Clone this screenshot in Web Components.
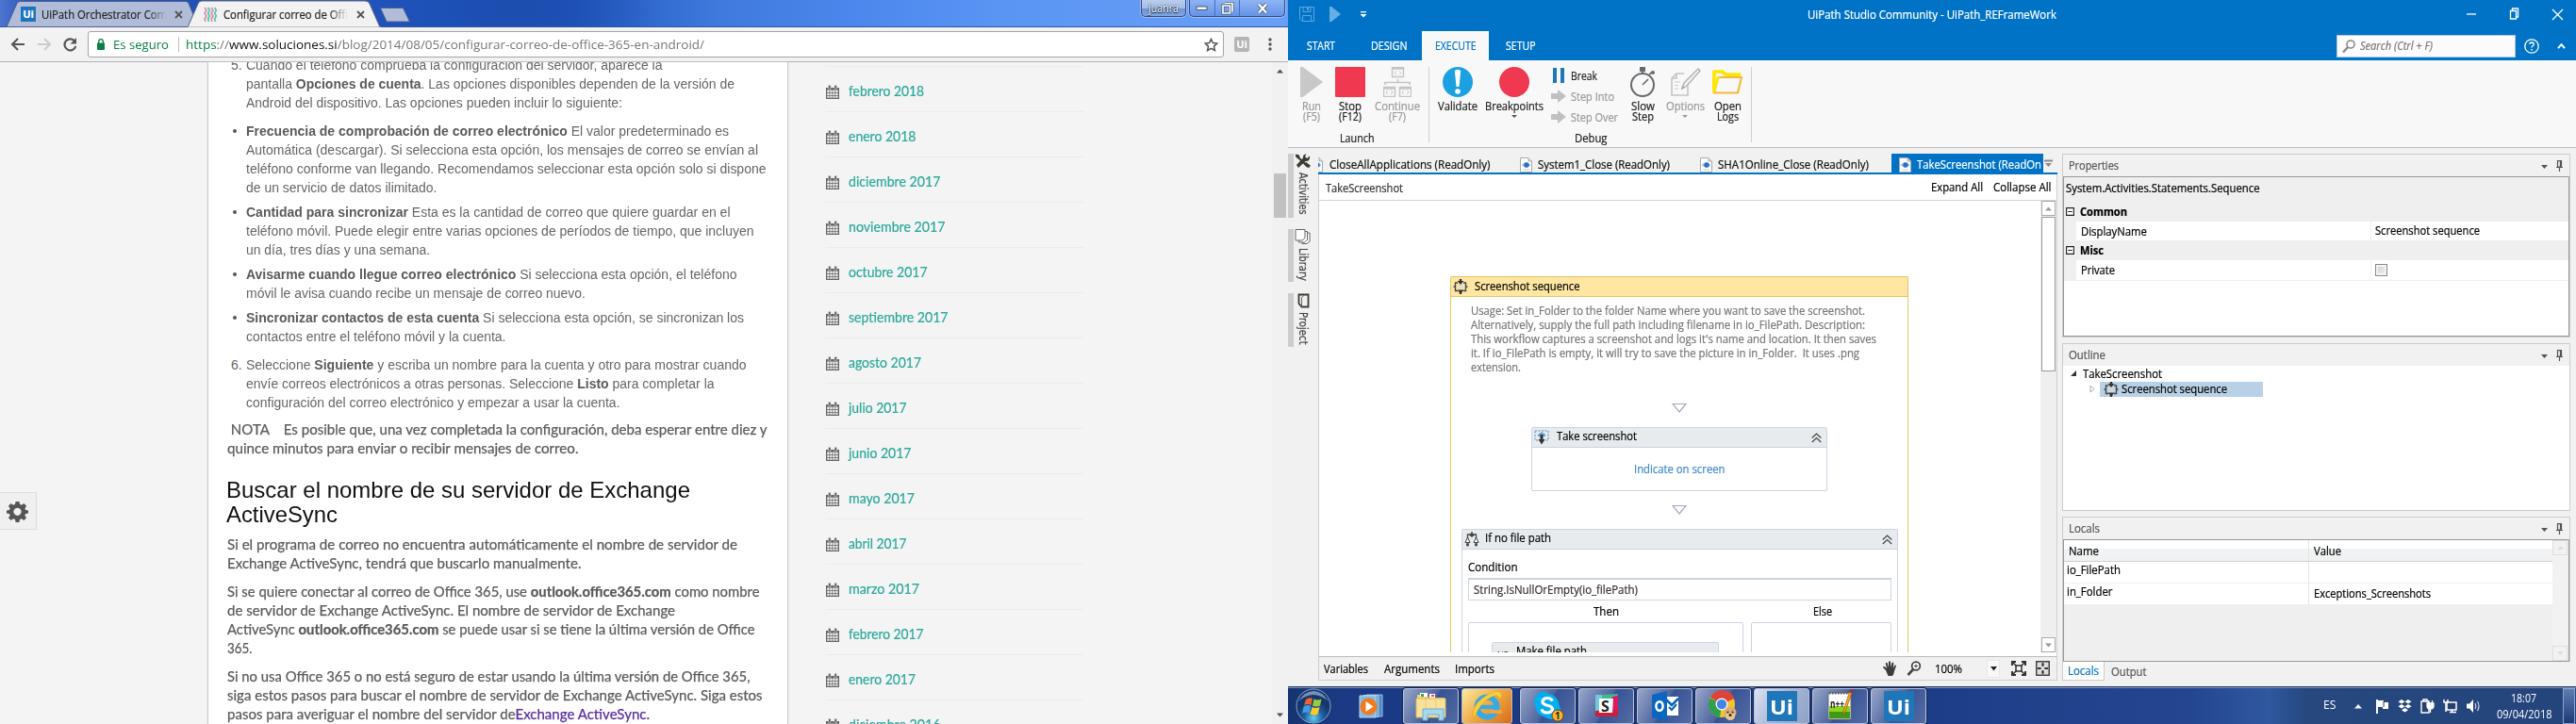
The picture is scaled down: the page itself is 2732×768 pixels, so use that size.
<!DOCTYPE html>
<html lang="es">
<head>
<meta charset="utf-8">
<title>Escritorio</title>
<style>
html,body{margin:0;padding:0;width:2732px;height:768px;overflow:hidden;background:#f0f0f0}
body{font-family:"Open Sans","Noto Sans",sans-serif;font-size:12px}
</style>
</head>
<body>
<desk-top></desk-top>
<script>
const define = (name, html) => customElements.define(name, class extends HTMLElement {
  connectedCallback() {
    if (this.shadowRoot) return;
    this.attachShadow({mode: 'open'}).innerHTML = typeof html === 'function' ? html(this) : html;
  }
});

/* One line of text condensed or widened to a given width. */
customElements.define('fit-text', class extends HTMLElement {
  connectedCallback() {
    if (!this.shadowRoot) {
      this.attachShadow({mode: 'open'}).innerHTML =
        `<style>:host{display:block;flex:none;white-space:pre;width:${this.getAttribute('w')}px}
        span{display:inline-block;transform-origin:0 50%;white-space:pre}</style><span><slot></slot></span>`;
    }
    this.fit();
    window.addEventListener('load', () => this.fit());
  }
  fit() {
    const s = this.shadowRoot.querySelector('span');
    s.style.transform = 'none';
    const n = s.getBoundingClientRect().width;
    if (n) s.style.transform = `scaleX(${(this.getAttribute('w') / n).toFixed(4)})`;
  }
});
const T = (w, t, c = '', s = '') => `<fit-text w="${w}" class="${c}" style="${s}">${t}</fit-text>`;

const ICONS = {
  seq: [16,16,'<path d="M5 4H2.500v8.500H5M11 4h2.500v8.500H11M2.500 8H.5M13.500 8h2" fill="none" stroke="#444" stroke-width="1.400"/><path d="M5 5h6v6.500H5z" fill="#d8d8d8" opacity=".7"/><path d="M8 0v4M8 12v4" stroke="#333" stroke-width="2.400"/><path d="M4.500 2h7L8 6zM4.500 11.500h7L8 15.500z" fill="#333"/>'],
  page: [13,16,'<path d="M.5.500h8.500l3.500 3.500v11.500H.5z" fill="#fff" stroke="#a9a9a9"/><path d="M9 .500V4h3.500" fill="#ddd" stroke="#a9a9a9"/><path d="M1.500 8q5-5.500 10 0-5 5.500-10 0z" fill="#a8c6e8"/><circle cx="7" cy="8" r="2.700" fill="#2b6fc7"/><path d="M3 13h7" stroke="#ccc"/>'],
  cal: [14,15,'<path d="M0 3h14v12H0z" fill="#666"/><path d="M1.300 5.500h2.200V8H1.300zM4.300 5.500h2.200V8H4.300zM7.300 5.500h2.200V8H7.300zM10.300 5.500h2.300V8h-2.300zM1.300 8.800h2.200v2.200H1.300zM4.300 8.800h2.200v2.200H4.300zM7.300 8.800h2.200v2.200H7.300zM10.300 8.800h2.300v2.200h-2.300zM1.300 11.800h2.200v2H1.300zM4.300 11.800h2.200v2H4.300zM7.300 11.800h2.200v2H7.300zM10.300 11.800h2.300v2h-2.300z" fill="#f4f4f4"/><rect x="2.500" y=".3" width="2.600" height="4.200" rx="1" fill="#666" stroke="#f4f4f4" stroke-width=".5"/><rect x="8.900" y=".3" width="2.600" height="4.200" rx="1" fill="#666" stroke="#f4f4f4" stroke-width=".5"/>'],
  gear: [24,24,'<path d="M10 1h4l.6 3 2 .9L19.200 3 22 6l-1.800 2.500.8 2 3 .500v3l-3 .6-.8 2L22 19l-2.800 2.800-2.600-1.800-2 .8L14 24h-4l-.6-3.200-2-.8L4.800 21.800 2 19l1.800-2.400-.8-2L0 14v-3l3-.500.8-2L2 6l2.800-3 2.600 1.900 2-.9zM12 8a4.300 4.300 0 1 0 .01 0z" fill="#555" fill-rule="evenodd"/>'],
  save: [16,16,'<path d="M.5.500H15.500V15.500H3L.5 13z" fill="none" stroke="#5ca6df"/><path d="M4 .500v5h8v-5M3.500 15.500v-6h9v6" fill="none" stroke="#5ca6df"/><path d="M9 1v3" stroke="#5ca6df" stroke-width="2"/>'],
  qplay: [12,16,'<path d="M0 0h2l10 8-10 8H0z" fill="#67aee5"/>'],
  qdown: [8,7,'<path d="M1 .700h6" stroke="#fff" stroke-width="1.300"/><path d="M.5 3h7L4 6.500z" fill="#fff"/>'],
  run: [24,32,'<path d="M0 0h2q1 0 2 1l20 15L4 31q-1 1-2 1H0z" fill="#c8c8c8"/>'],
  stop: [32,32,'<rect width="32" height="32" rx="1" fill="#f03850"/>'],
  cont: [30,32,'<g fill="none" stroke="#c4c4c4"><path d="M9.500.500h12v10h-12zM.500 21.500h12v10H.500zM17.500 21.500h12v10h-12zM9.500 2h12M.5 23h12M17.500 23h12" stroke-width="1.400"/><path d="M15.500 13v4M2 19v-2.500h26V19" stroke-width="1.600"/><path d="M14 4.500l-2 2 2 2M17 4.500l2 2-2 2M5 25l-2 2 2 2M8 25l2 2-2 2M22 25l-2 2 2 2M25 25l2 2-2 2"/></g>'],
  valid: [32,32,'<circle cx="16" cy="16" r="16" fill="#1ba1e2"/><path d="M12.800 4q3.200-2.500 6.400 0L17.500 21h-3z" fill="#fff"/><circle cx="16" cy="26" r="2.800" fill="#fff"/>'],
  bp: [32,32,'<circle cx="16" cy="16" r="16" fill="#f03850"/>'],
  dd: [6,3,'<path d="M0 0h6L3 3z" fill="#555"/>'],
  ddg: [6,3,'<path d="M0 0h6L3 3z" fill="#999"/>'],
  pause: [16,16,'<path d="M2 0h4v16H2zM10 0h4v16h-4z" fill="#1f77b8"/>'],
  step: [16,16,'<path d="M0 5h7V1l9 7-9 7v-4H0z" fill="#c0c0c0"/>'],
  watch: [28,32,'<circle cx="13" cy="19" r="12" fill="none" stroke="#666b70" stroke-width="2"/><path d="M10 0h6v5h-6zM12 5h2v3h-2z" fill="#666b70"/><path d="M20 8l4-3M13 19l6-6" stroke="#666b70" stroke-width="1.600"/><circle cx="24" cy="6" r="2" fill="#666b70"/>'],
  opt: [33,32,'<path d="M15 7H7L2 12v18h17V20M2 12h5V7" fill="none" stroke="#c4c4c4" stroke-width="1.600"/><path d="M5 16h6M5 19.500h4M5 23h4" stroke="#c8c8c8"/><path d="M30 2l2 2-14 16-5 3 2-6z" fill="#f4f4f4" stroke="#b0b0b0" stroke-width="1.400"/><path d="M12 24l1-4 3 2z" fill="#aaa"/>'],
  folder: [32,32,'<path d="M2 27V6.500q0-1.500 1.500-1.500h7l3 3h15v4" fill="none" stroke="#ffe600" stroke-width="3.600"/><path d="M5 27L7.500 11H30.500L28 27z" fill="#f8f8f8"/><path d="M2 27.500L6 11h25l-4 16.500z" fill="none" stroke="#f6b73c" stroke-width="2.200"/><path d="M1.500 27V5h10l3 3h15" fill="none" stroke="#ffe600" stroke-width="2.500"/><path d="M2.500 25L6.500 10" stroke="#ffe600" stroke-width="2.500"/>'],
  search: [14,14,'<circle cx="9" cy="5" r="4" fill="none" stroke="#888" stroke-width="1.600"/><path d="M6 8l-5 5.500" stroke="#888" stroke-width="2.400"/>'],
  help: [16,16,'<circle cx="8" cy="8" r="7.200" fill="none" stroke="#fff" stroke-width="1.300"/><path d="M5.800 6q.2-2 2.200-2 2.300.2 2.200 2 0 1-1.200 1.800-1 .6-1 1.700" fill="none" stroke="#fff" stroke-width="1.300"/><path d="M7.200 11h1.600v1.500H7.200z" fill="#fff"/>'],
  up: [9,6,'<path d="M1 5.200l3.500-4 3.500 4" fill="none" stroke="#fff" stroke-width="2"/>'],
  tools: [18,16,'<path d="M2 2l12 12" stroke="#3c3a35" stroke-width="2.200"/><path d="M1 .500l4 1 .5 3.500-2 .500L1 3z" fill="#3c3a35"/><path d="M16 2.500l-3 2.500-2-2 1.500-2.500q-4 0-3.500 4L2 12l2 3 7.500-7q5 .5 4.500-5.500z" fill="#3c3a35"/><path d="M11 10l5 4" stroke="#3c3a35" stroke-width="3"/>'],
  lib: [18,16,'<g fill="#fff" stroke="#666"><path d="M8 4h8v9l-3 2.500H8z"/><path d="M4.500 2.500h9v9l-3 2.500h-6z"/><path d="M1 .500h10v9L8 12H1z"/></g>'],
  proj: [14,16,'<path d="M2.500 1.500H12.500v13H5.500L2.500 11z" fill="none" stroke="#3c3a35" stroke-width="1.800"/><path d="M5.500 14V4.500L9 1.500" fill="none" stroke="#666"/>'],
  tri: [16,10,'<path d="M1 .500h14L8 9z" fill="#fff" stroke="#a0abc0" stroke-width="1.200"/>'],
  chev: [11,11,'<path d="M.8 5.500L5.500 1l4.700 4.500M.8 10L5.500 5.500l4.700 4.500" fill="none" stroke="#444" stroke-width="1.200"/>'],
  shot: [16,16,'<path d="M1 1h14v10H1z" fill="none" stroke="#4d8cc9" stroke-dasharray="2 1.500"/><path d="M4 5l4-3 4 3v2H4z" fill="#6aa5dd"/><path d="M8 5v7" stroke="#333" stroke-width="3"/><path d="M4.500 10h7L8 15.500z" fill="#333"/>'],
  iff: [16,16,'<path d="M8 0v4M3.500 8V3h9v5" fill="none" stroke="#444" stroke-width="1.300"/><path d="M8 1l3 2.500L8 6 5 3.500z" fill="#444"/><path d="M3.500 6L6 11.500H1zM12.500 6l2.500 5.500h-5z" fill="#fff" stroke="#444"/><path d="M3.500 11v3M12.500 11v3" stroke="#444" stroke-width="2"/><circle cx="3.500" cy="14" r="1.500" fill="#444"/><circle cx="12.500" cy="14" r="1.500" fill="#444"/>'],
  hand: [16,16,'<path d="M4 10L1 7q0-1.500 1.700-1L5 8 3.800 2.500q1-1.500 1.900 0L7 7 7 1q1-1.500 2 0l.2 6L10.500 2q1.300-1 1.800.4L11.700 8l1.800-3.500q1.500-.5 1.400 1L13 11q-.3 3-2 5H6.500z" fill="#3c3c3c"/>'],
  zoom: [16,16,'<circle cx="10" cy="5.500" r="4.300" fill="#fff" stroke="#444" stroke-width="1.800"/><path d="M10 3.500v4M8 5.500h4" stroke="#444"/><path d="M7 9l-5.500 6" stroke="#444" stroke-width="2.600"/>'],
  fit: [16,16,'<path d="M1 5V1h4M11 1h4v4M15 11v4h-4M5 15H1v-4" fill="none" stroke="#333" stroke-width="2"/><path d="M2 2l4 4M14 2l-4 4M2 14l4-4M14 14l-4-4" stroke="#333" stroke-width="1.500"/><path d="M5 5h6v6H5z" fill="none" stroke="#333" stroke-width="1.500"/>'],
  over: [16,16,'<path d="M.8.800h14.400v14.400H.8z" fill="#ddd" stroke="#444" stroke-width="1.600"/><path d="M8 2v4M8 10v4M2 8h4M10 8h4" stroke="#333" stroke-width="1.800"/><path d="M6.500 4h3M6.500 12h3" stroke="#333"/>'],
  pin: [7,12,'<path d="M1.500.600h4v6.400h-4zM0 7.500h7M3.500 7.500V12M4.500 1v6" fill="none" stroke="#555" stroke-width="1.200"/>'],
  pd: [7,4,'<path d="M0 0h7L3.500 4z" fill="#555"/>'],
  minus: [9,9,'<path d="M.6.600h7.800v7.800H.6z" fill="#fff" stroke="#222" stroke-width="1.100"/><path d="M2.200 4.500h4.600" stroke="#222"/>'],
  back: [16,14,'<path d="M15 7H2M8 1L2 7l6 6" fill="none" stroke="#555" stroke-width="2"/>'],
  fwd: [16,14,'<path d="M1 7h13M8 1l6 6-6 6" fill="none" stroke="#ccc" stroke-width="2"/>'],
  reload: [15,15,'<path d="M12.500 4A6 6 0 1 0 13.300 9" fill="none" stroke="#555" stroke-width="2.200"/><path d="M14 0v6.500H7.500z" fill="#555"/>'],
  lock: [8,12,'<path d="M0 4.500h8V11q0 1-1 1H1q-1 0-1-1z" fill="#0b8043"/><path d="M1.700 5V3q0-2.300 2.300-2.300T6.300 3v2" fill="none" stroke="#0b8043" stroke-width="1.300"/>'],
  star: [15,15,'<path d="M7.500 1.500l1.900 4.100 4.400.500-3.300 3 .900 4.400-3.900-2.200-3.900 2.200.900-4.400-3.300-3 4.400-.500z" fill="none" stroke="#555" stroke-width="1.500"/>'],
  dots: [4,16,'<circle cx="2" cy="3" r="1.700" fill="#555"/><circle cx="2" cy="8" r="1.700" fill="#555"/><circle cx="2" cy="13" r="1.700" fill="#555"/>'],
  x: [9,9,'<path d="M1 1l7 7M8 1L1 8" stroke="#555" stroke-width="1.800"/>'],
  fav: [14,16,'<path d="M1 1l2 3-2 3 2 3-2 3 1 3M8 1l2 3-2 3 2 3-2 3 1 3" fill="none" stroke="#e08ca4" stroke-width="1.700"/><path d="M4.500 1l2 3-2 3 2 3-2 3 1 3M11.500 1l2 3-2 3 2 3-2 3 1 3" fill="none" stroke="#55c4b4" stroke-width="1.700"/>'],
  orb: [38,38,'<defs><radialGradient id="o" cx=".5" cy=".85"><stop offset="0" stop-color="#5fd0f5"/><stop offset=".55" stop-color="#1f5f9e"/><stop offset="1" stop-color="#16376d"/></radialGradient></defs><circle cx="19" cy="19" r="18" fill="url(#o)" stroke="#7fa6cf"/><path d="M3 14q16-14 32 0Q28 3 19 3T3 14z" fill="#b5cbe6" opacity=".6"/><path d="M11 12q4-3 7-1l-1.500 7q-4-2-7.500 0z" fill="#f0642c"/><path d="M19.500 11.500q4 2 8 0L26 18.500q-4 2-8 0z" fill="#9ccc3c"/><path d="M8.600 19.500q4-2.500 7.600-.5l-1.700 7.500q-3.500-2-7.500.5z" fill="#3f9fe4"/><path d="M17.500 20q4 2 8 0l-1.800 7.500q-4 2-8 0z" fill="#ffc829"/>'],
  wmp: [26,26,'<path d="M8 1h17v23H8z" fill="#4e88bf" stroke="#8fc0e8"/><path d="M5 1.500h16v23H5z" fill="#6aa2d4" stroke="#a5cdee"/><path d="M1 2h17v23H1z" fill="#86b7de" stroke="#b8daf3"/><circle cx="10.500" cy="13.500" r="9" fill="#f07a1c"/><path d="M7.500 8l8 5.500-8 5.500z" fill="#fff"/>'],
  expl: [34,32,'<path d="M2 4h10l2 3h17v20H2z" fill="#f0d278"/><path d="M5 2h8v4H5zM15 3h6v4h-6z" fill="#fff"/><path d="M6 3h3v3H6z" fill="#41a33c"/><path d="M17 4h3v2h-3z" fill="#e44"/><path d="M1 8h31v20H1z" fill="#f8e29a" stroke="#d9b85e"/><path d="M11 8v20M22 8v20" stroke="#e8cb7c"/><path d="M8 31V19h22v12h-5v-6H13v6z" fill="#a7d7f0" stroke="#6aaed6"/>'],
  ie: [34,34,'<circle cx="17" cy="18" r="10.500" fill="none" stroke="#36a9e8" stroke-width="6"/><path d="M8 18h19" stroke="#36a9e8" stroke-width="4.500"/><path d="M20 21h13v4H20z" fill="#eba544"/><path d="M3 31Q-1 18 13 8 27-2 32 3q2 3-2 8 0-6-5-5Q10 11 3 31z" fill="#f7cf3b" stroke="#d19a1d" stroke-width=".5"/>'],
  skype: [34,34,'<circle cx="12" cy="12" r="10" fill="#00aff0"/><circle cx="20" cy="21" r="10" fill="#00aff0"/><circle cx="16" cy="16.500" r="12.500" fill="#00aff0"/><path d="M21.500 11.500q-1.500-3-5.500-3t-5 3q-.5 3.500 5 4.700 6 1.200 5.500 4.600-1.500 3.200-5.500 3.200-5 0-6-3.700" fill="none" stroke="#fff" stroke-width="3.200"/><circle cx="27" cy="27" r="6" fill="#f9b52e" stroke="#704b00"/>'],
  slack: [28,28,'<path d="M7 2l19-1-2 7-18 2z" fill="#3eb991"/><path d="M2 2h7l-1 20H2z" fill="#70cadb"/><path d="M20 4l6-1v22h-7z" fill="#e01563"/><path d="M2 19l24-1v7H2z" fill="#c8203c"/><path d="M6 6h15l-1 15H6z" fill="#fff"/>'],
  outl: [30,32,'<path d="M14 6h15v20H14z" fill="#fff"/><path d="M15 8l7 7 7-7" fill="none" stroke="#0a62b8" stroke-width="2.500"/><path d="M1 4l16-4v32L1 28z" fill="#0a66c0"/><ellipse cx="9" cy="16" rx="3.600" ry="4.800" fill="none" stroke="#fff" stroke-width="2.500"/><path d="M19 17l3 3 5-6" fill="none" stroke="#0a62b8" stroke-width="2"/>'],
  chrome: [34,34,'<circle cx="15" cy="15" r="14" fill="#f2c52d"/><path d="M15 15L3 8A14 14 0 0 1 28.500 9z" fill="#dd4437"/><path d="M15 15L2.500 8.500A14 14 0 0 0 13 29z" fill="#2f9e52"/><circle cx="15" cy="15" r="6.500" fill="#fff"/><circle cx="15" cy="15" r="5.200" fill="#4285e8"/><circle cx="24" cy="24" r="6.500" fill="#dcae74"/><ellipse cx="24" cy="28" rx="5" ry="4" fill="#e9c796"/><circle cx="21.500" cy="23.500" r="1" fill="#3a2211"/><circle cx="26.500" cy="23.500" r="1" fill="#3a2211"/><circle cx="24" cy="26.500" r="1.500" fill="#3a2211"/>'],
  npp: [32,34,'<path d="M3 3h24v28H3z" fill="#fff" stroke="#666"/><path d="M4 17h22v13H4z" fill="#8ed31e"/><path d="M4 23h22v7H4z" fill="#3c9b12"/><path d="M4 3.500h22" stroke="#555" stroke-width="2" stroke-dasharray="1.500 1.500"/><path d="M28 3l-7 20-2 4 0-5L25.500 2z" fill="#f5a51c" stroke="#86510d" stroke-width=".6"/><path d="M28 3l-2.500-1L27 0h3z" fill="#c22"/>'],
  flag: [15,16,'<path d="M2 1v15" stroke="#fff" stroke-width="2"/><path d="M3 2h6v2h5v7H8V9H3z" fill="#fff"/><path d="M9 3v6" stroke="#345" stroke-width="1"/>'],
  drop: [15,14,'<path d="M4 0l3.500 2.300L4 4.600.500 2.300zM11 0l3.500 2.300L11 4.600 7.500 2.300zM4 4.900l3.500 2.300L4 9.500.500 7.200zM11 4.900l3.500 2.300L11 9.500 7.500 7.200zM7.500 9l3.500 2.300-3.500 2.300L4 11.300z" fill="#fff"/>'],
  bat: [15,16,'<path d="M1 3h8v12H1zM3 1h4v2H3z" fill="#28406b" stroke="#fff" stroke-width="1.400"/><path d="M7 5h7v3q0 3-3.500 3T7 8zM8.500 2v3M12.500 2v3M10.500 11v4" fill="#fff" stroke="#fff" stroke-width="1.300"/>'],
  net: [15,16,'<path d="M4 4h10v8H4zM7 14.500h7M9.500 12v2" fill="#28406b" stroke="#fff" stroke-width="1.500"/><path d="M1 1v3h4V1M3 4v10" fill="none" stroke="#fff" stroke-width="1.500"/>'],
  vol: [15,16,'<path d="M1 5.500h3L8 1v14l-4-4.500H1z" fill="#fff"/><path d="M10 5q1.500 3 0 6M12.500 3q3 5 0 10" fill="none" stroke="#c8d4e8" stroke-width="1.200"/>'],
};
define('ui-icon', el => { const [w,h,b] = ICONS[el.getAttribute('n')];
  const W = el.getAttribute('w') || w, H = el.getAttribute('h') || h;
  return `<style>:host{display:block;flex:none;width:${W}px;height:${H}px}svg{display:block}</style><svg width="${W}" height="${H}" viewBox="0 0 ${w} ${h}" preserveAspectRatio="none">${b}</svg>`; });
const I = (n, s = '', x = '') => `<ui-icon n="${n}" style="${s}" ${x}></ui-icon>`;
const BASE = `*{box-sizing:border-box}.r{display:flex;align-items:center;flex:none}.c{display:flex;flex-direction:column;flex:none}.g{flex:1}`;

/* ---------- browser window ---------- */
define('chrome-tabs', `<style>${BASE}
:host{display:flex;height:29px;flex:none;background:radial-gradient(ellipse 150px 60px at 550px 10px,#1c4cae,transparent),linear-gradient(90deg,#4c74cf 0,#2f57b8 30px,#2350b5 200px,#1f54bc 480px,#2157bd 600px,#3f79dc 760px,#4b87ec 900px,#5a95f4 1060px,#6a9ff6 1366px);border-bottom:1px solid #2d55a4}
svg.bg{position:absolute;left:0;top:0}
.strip{position:relative;width:1366px;height:29px;display:flex;align-items:flex-start}
.t{position:relative;height:28px;display:flex;align-items:center;padding-top:2px;-webkit-text-stroke:.2px}
.ui{width:16px;height:16px;background:#1c74bb;color:#fff;font:bold 11px/15px "Open Sans";text-align:center}
.clip{-webkit-mask-image:linear-gradient(90deg,#000 85%,transparent)}
.win{position:relative;display:flex;height:18px;border:1px solid #2f4c84;border-top:0;border-radius:0 0 5px 5px;background:linear-gradient(#8fb4f4,#6493e6);box-shadow:0 0 0 1px #9dbdf6}
.win div{border-right:1px solid #4470bd;display:flex;align-items:center;justify-content:center}
.win div:last-child{border:0}
</style><div class="strip">
<svg class="bg" width="450" height="29"><path d="M7 28.500L18 3.500q1-2 3-2H197q2 0 3 2l5 12-5 13z" fill="#b1bdd8" stroke="#4c5f8c"/><path d="M199 29L210 4q1-3 4-3H387q4 0 5 3l11 25z" fill="#f2f2f2" stroke="#5c6a86"/><path d="M199 30h205v-1.300H199z" fill="#f2f2f2"/><path d="M403.500 8.500h24l7 14.500h-24.500z" fill="#b1bdd8" stroke="#4c5f8c"/></svg>
<div class="t" style="padding-left:22px;width:211px"><div class="ui">Ui</div>${T(133,'UiPath Orchestrator Com','clip','margin-left:6px;color:#222')}${I('x','margin-left:8px')}</div>
<div class="t" style="padding-left:5px;width:200px">${I('fav')}${T(132,'Configurar correo de Offi','clip','margin-left:7px;color:#222')}${I('x','margin-left:9px')}</div>
<div class="g"></div>
<div class="win" style="width:48px;background:linear-gradient(#b9cdee,#a3bde8 50%,#6e93cf 52%,#7ea5e2);margin-right:3px"><div style="width:100%;color:#fff;text-shadow:0 0 2px #123,0 1px 1px #123">${T(32,'juanra')}</div></div>
<div class="win" style="width:102px;margin-right:3px"><div style="width:27px"><svg width="14" height="6"><path d="M1 1h11v3.500H1z" fill="#fff" stroke="#456"/></svg></div><div style="width:27px"><svg width="14" height="14"><path d="M4 1.500h8v9M2 4h7.500v8H2z" fill="none" stroke="#456" stroke-width="3"/><path d="M4 1.500h8v9M2 4h7.500v8H2z" fill="none" stroke="#fff" stroke-width="1.700"/></svg></div><div style="width:47px"><svg width="14" height="12"><path d="M3 1.500l8 9M11 1.500l-8 9" stroke="#456" stroke-width="4"/><path d="M3 1.500l8 9M11 1.500l-8 9" stroke="#fff" stroke-width="2.400"/></svg></div></div>
</div>`);

define('chrome-bar', `<style>${BASE}
:host{display:flex;align-items:center;height:37px;flex:none;background:#f2f2f2;border-bottom:1px solid #b3b0b3;padding:0 17px 0 11px}
.box{height:28px;width:1205px;border:1px solid #a5a5a5;border-radius:3px;background:#fff;display:flex;align-items:center;padding:0 5px 0 9px;margin-left:11px;font-size:13.500px}
.ui{width:16px;height:16px;border-radius:2px;background:#b5b5b5;color:#fff;font:bold 11px/15px "Open Sans";text-align:center}
</style>${I('back')}${I('fwd','margin-left:12px')}${I('reload','margin-left:12px')}
<div class="box">${I('lock')}${T(59,'Es seguro','','color:#0b8043;margin-left:9px')}<div style="width:1px;height:16px;background:#bbb;margin:0 7px 0 10px"></div>${T(550,'<span style="color:#0b8043">https</span>://<span style="color:#111">www.soluciones.si</span>/blog/2014/08/05/configurar-correo-de-office-365-en-android/','','color:#777')}<div class="g"></div>${I('star')}</div>
<div class="ui" style="margin-left:11px">Ui</div><div class="g"></div>${I('dots')}`);

const para = (x, top, ls, extra='') => `<div style="margin:${top}px 0 0 ${x}px;${extra}">${ls.map(l=>T(l[0],l[1])).join('')}</div>`;
const item = (mark, top, ls) => `<div class="r" style="align-items:flex-start;margin:${top}px 0 0 24px"><div style="width:15.500px;flex:none">${mark}</div><div>${ls.map(l=>T(l[0],l[1])).join('')}</div></div>`;
const dot = '<div style="width:4px;height:4px;border-radius:50%;background:#555;margin:8px 0 0 2px"></div>';
define('blog-post', `<style>${BASE}
:host{display:block;flex:none;width:616px;height:702px;overflow:hidden;background:#fff;border:solid #cacaca;border-width:0 1px;box-shadow:0 0 2px #ddd;color:#666;font:14px/20px "Liberation Sans",Arial,sans-serif}
.m{font-family:Lato,"Open Sans",sans-serif;font-size:14.500px;color:#5c5c5c;-webkit-text-stroke:.25px}
h2{font:24px/26px "Liberation Sans",Arial,sans-serif;color:#111;margin:21px 0 0 19px}
b{color:#5a5a5a}.m b{font-weight:700}
</style>
${item('5.',-7,[[441.5,'Cuando el teléfono comprueba la configuración del servidor, aparece la'],[518,'pantalla <b>Opciones de cuenta</b>. Las opciones disponibles dependen de la versión de'],[399,'Android del dispositivo. Las opciones pueden incluir lo siguiente:']])}
${item(dot,10,[[512,'<b>Frecuencia de comprobación de correo electrónico</b> El valor predeterminado es'],[543,'Automática (descargar). Si selecciona esta opción, los mensajes de correo se envían al'],[551.5,'teléfono conforme van llegando. Recomendamos seleccionar esta opción solo si dispone'],[202.5,'de un servicio de datos ilimitado.']])}
${item(dot,6,[[513.5,'<b>Cantidad para sincronizar</b> Esta es la cantidad de correo que quiere guardar en el'],[538.5,'teléfono móvil. Puede elegir entre varias opciones de períodos de tiempo, que incluyen'],[195,'un día, tres días y una semana.']])}
${item(dot,6,[[520.5,'<b>Avisarme cuando llegue correo electrónico</b> Si selecciona esta opción, el teléfono'],[360,'móvil le avisa cuando recibe un mensaje de correo nuevo.']])}
${item(dot,6,[[528,'<b>Sincronizar contactos de esta cuenta</b> Si selecciona esta opción, se sincronizan los'],[275.5,'contactos entre el teléfono móvil y la cuenta.']])}
${item('6.',10,[[530.5,'Seleccione <b>Siguiente</b> y escriba un nombre para la cuenta y otro para mostrar cuando'],[496.5,'envíe correos electrónicos a otras personas. Seleccione <b>Listo</b> para completar la'],[396.5,'configuración del correo electrónico y empezar a usar la cuenta.']])}
<div class="m">${para(19.5,9,[[572.5,'&nbsp;NOTA &nbsp;&nbsp; Es posible que, una vez completada la configuración, deba esperar entre diez y'],[372.5,'quince minutos para enviar o recibir mensajes de correo.']])}</div>
<h2>${T(492,'Buscar el nombre de su servidor de Exchange')}${T(118,'ActiveSync')}</h2>
<div class="m">${para(19.5,9,[[541,'Si el programa de correo no encuentra automáticamente el nombre de servidor de'],[375.5,'Exchange ActiveSync, tendrá que buscarlo manualmente.']])}
${para(19.5,10,[[564.5,'Si se quiere conectar al correo de Office 365, use <b>outlook.office365.com</b> como nombre'],[475,'de servidor de Exchange ActiveSync. El nombre de servidor de Exchange'],[559.5,'ActiveSync <b>outlook.office365.com</b> se puede usar si se tiene la última versión de Office'],[26.5,'365.']])}
${para(19.5,10,[[554.5,'Si no usa Office 365 o no está seguro de estar usando la última versión de Office 365,'],[567.5,'siga estos pasos para buscar el nombre de servidor de Exchange ActiveSync. Siga estos'],[448,'pasos para averiguar el nombre del servidor de<span style="color:#5b2da0">Exchange ActiveSync.</span>']])}</div>`);

define('archive-list', `<style>${BASE}
:host{display:block;width:273px;margin-left:40px;flex:none;overflow:hidden;font:14.500px/20px Lato,"Open Sans",sans-serif;color:#2ba89c;-webkit-text-stroke:.2px}
.row{height:48px;border-top:1px solid #ebebeb;display:flex;align-items:center;padding-top:5px}
</style><div style="height:4px"></div>${[['febrero 2018',80],['enero 2018',71.5],['diciembre 2017',97.5],['noviembre 2017',102.5],['octubre 2017',83.5],['septiembre 2017',105.5],['agosto 2017',77],['julio 2017',61.5],['junio 2017',66.5],['mayo 2017',70],['abril 2017',61.5],['marzo 2017',75],['febrero 2017',79.5],['enero 2017',71],['diciembre 2016',97.5]].map(a=>`<div class="row">${I('cal')}${T(a[1],a[0],'','margin:0 0 1px 9.500px')}</div>`).join('')}`);

define('browser-window', `<style>${BASE}
:host{display:flex;flex-direction:column;width:1366px;height:768px;flex:none;background:#f4f4f4;overflow:hidden}
.page{display:flex;height:702px;flex:none}
.left{width:220px;flex:none}
.cog{width:39px;height:40px;margin-top:456px;border:1px solid #ddd;border-left:0;background:#f0f0f0;display:flex;align-items:center;padding-left:7px}
.sb{width:17px;flex:none;background:#f1f1f1;display:flex;flex-direction:column;align-items:center}
</style><chrome-tabs></chrome-tabs><chrome-bar></chrome-bar>
<div class="page"><div class="left"><div class="cog">${I('gear','','w="23" h="23"')}</div></div><blog-post></blog-post><archive-list></archive-list><div class="g"></div>
<div class="sb"><svg width="9" height="5" style="margin-top:7px"><path d="M1 4.500h7L4.500.500z" fill="#505050"/></svg><div style="width:13px;height:47px;background:#c1c1c1;margin-top:106px"></div><div class="g"></div><svg width="9" height="5" style="margin-bottom:7px"><path d="M1 .500h7L4.500 4.500z" fill="#505050"/></svg></div></div>`);

/* ---------- studio window ---------- */
define('studio-title', `<style>${BASE}
:host{display:block;height:64px;flex:none;background:#0173c7;color:#fff}
.a{height:33px;padding-left:12px;padding-bottom:3px}.b{height:31px}
.tab{height:31px;display:flex;align-items:center;justify-content:center;flex:none}
.on{background:#f8f8f8;color:#0173c7}
.s{width:190px;height:24px;border:1px solid #a8c8e4;background:#fcfcfc;display:flex;align-items:center;padding-left:5px;color:#777;font-style:italic}
</style><div class="r a">${I('save')}${I('qplay','margin-left:16px')}${I('qdown','margin-left:20px')}<div style="width:467px"></div>${T(264,'UiPath Studio Community - UiPath_REFrameWork')}
<div class="g"></div><svg width="126" height="16"><path d="M10 8h10" stroke="#fff" stroke-width="1.300"/><path d="M56.500 4.500h6v8.500h-6zM58.500 4V2h6v9h-2" fill="none" stroke="#fff" stroke-width="1.300"/><path d="M101 3l11 11M112 3l-11 11" stroke="#fff" stroke-width="1.300"/></svg></div>
<div class="r b"><div class="tab" style="width:70px;padding-left:0">${T(30,'START')}</div><div class="tab" style="width:72px;padding-left:2px">${T(38.5,'DESIGN')}</div><div class="tab on" style="width:71px">${T(43.5,'EXECUTE')}</div><div class="tab" style="width:67px">${T(31.5,'SETUP')}</div><div class="g"></div>
<div class="s">${I('search')}${T(77,'Search (Ctrl + F)','','margin-left:5px')}</div>${I('help','margin-left:9px')}${I('up','margin:0 11px 0 19px')}</div>`);

const big = (ic, w, ml, ls, o='') => `<div class="big" style="width:${w}px;margin-left:${ml}px;${o}">${I(ic)}<div style="height:4px"></div>${ls.map(l=>typeof l==='string'?I(l,'margin-top:4px'):T(l[0],l[1])).join('')}</div>`;
define('studio-ribbon', `<style>${BASE}
:host{display:flex;height:93px;flex:none;background:#f8f8f8;border-bottom:1px solid #bcbcbc;padding-top:7px;color:#222;line-height:11px}
.grp{display:flex;flex-direction:column;flex:none}
.big{display:flex;flex-direction:column;align-items:center;flex:none}
.items{display:flex;height:68px;align-items:flex-start}
.sep{width:1px;height:80px;background:#d0d0d0;flex:none}
.d{color:#999}.br{height:22px;display:flex;align-items:center}
</style>
<div class="grp" style="width:149px"><div class="items">${big('run',37,6,[[20,'Run'],[18,'(F5)']],'color:#999')}${big('stop',42,2,[[24,'Stop'],[24,'(F12)']])}${big('cont',56,1,[[48,'Continue'],[18,'(F7)']],'color:#999')}</div>${T(36.5,'Launch','','margin:2px 0 0 55px')}</div><div class="sep"></div>
<div class="grp" style="width:341px"><div class="items">${big('valid',50,5,[[42,'Validate']])}${big('bp',66,2,[[62,'Breakpoints'],'dd'])}
<div style="width:72px;margin-left:6px;margin-top:-2px"><div class="br">${I('pause')}${T(28,'Break','','margin-left:5px')}</div><div class="br d">${I('step')}${T(46,'Step Into','','margin-left:5px')}</div><div class="br d">${I('step')}${T(50,'Step Over','','margin-left:5px')}</div></div>
${big('watch',35,8,[[25,'Slow'],[23,'Step']])}${big('opt',46,4,[[41,'Options'],'ddg'],'color:#999')}${big('folder',34,5,[[29,'Open'],[23,'Logs']])}</div>${T(34.5,'Debug','','margin:2px 0 0 154px')}</div><div class="sep"></div>`);

define('side-tabs', `<style>${BASE}
:host{display:flex;flex-direction:column;width:32px;flex:none;padding-top:6px;color:#444}
.t{display:flex;border-left:6px solid #cccccc;margin-bottom:12px;flex:none}
.in{display:flex;flex-direction:column;align-items:center;width:20px}
.v{writing-mode:vertical-rl;font:11.500px/16px "DejaVu Sans","Open Sans";display:flex;justify-content:flex-start;align-items:center;flex:1;white-space:nowrap;padding-top:4px}
.v span{display:block;transform-origin:50% 0}
</style>
<div class="t" style="height:68px"><div class="in">${I('tools')}<div class="v"><span style="transform:scaleY(.85)">Activities</span></div></div></div>
<div class="t" style="height:56px"><div class="in">${I('lib')}<div class="v"><span style="transform:scaleY(.87)">Library</span></div></div></div>
<div class="t" style="height:57px"><div class="in">${I('proj')}<div class="v"><span style="transform:scaleY(.88)">Project</span></div></div></div>`);

define('doc-tabs', `<style>${BASE}
:host{display:flex;height:22px;flex:none;border-bottom:2px solid #0173c7;overflow:hidden;color:#111}
.a{height:20px;display:flex;align-items:center;flex:none;padding-top:3px}
</style>
<div class="a" style="margin-left:-8px;width:214px">${I('page')}${T(170.5,'CloseAllApplications (ReadOnly)','','margin:0 0 1px 7px')}</div>
<div class="a" style="width:191px;padding-left:8px">${I('page')}${T(140,'System1_Close (ReadOnly)','','margin:0 0 1px 6px')}</div>
<div class="a" style="width:211px;padding-left:8px">${I('page')}${T(160,'SHA1Online_Close (ReadOnly)','','margin:0 0 1px 6px')}</div>
<div class="a" style="width:161px;background:#0173c7;color:#fff;padding-left:8px;overflow:hidden">${I('page')}${T(132,'TakeScreenshot (ReadOn','','margin:0 0 1px 6px')}</div>
<svg width="9" height="9" style="margin:6px 0 0 1px"><path d="M0 1.500h9" stroke="#888" stroke-width="2"/><path d="M1 4h7L4.500 8z" fill="#888"/></svg>`);

define('seq-flow', `<style>${BASE}
:host{display:block;width:486px;margin:80px 0 0 139px;flex:none}
.seq{border:1px solid #e3c462;border-bottom:0;border-radius:2px 2px 0 0;background:#fff;height:399px}
.hd{height:21px;display:flex;align-items:center;flex:none}
.y{background:#ffe6a2;border-bottom:1px solid #e3c462;padding-left:2px}
.ann{color:#777;line-height:15px;margin:7px 0 0 20.500px}
.card{border:1px solid #cdd3e2;border-radius:2px;background:#fff}
.card .hd{background:#e7ebee;border-bottom:1px solid #cdd3e2;justify-content:space-between;padding-right:5px}
.tri{display:flex;justify-content:center}
</style><div class="seq"><div class="hd y">${I('seq')}${T(111.5,'Screenshot sequence','','margin:0 0 2px 7px')}</div>
<div class="ann">${T(418,'Usage: Set in_Folder to the folder Name where you want to save the screenshot.')}${T(418,'Alternatively, supply the full path including filename in io_FilePath. Description:')}${T(430,"This workflow captures a screenshot and logs it's name and location. It then saves")}${T(412,'it. If io_FilePath is empty, it will try to save the picture in in_Folder.&nbsp; It uses .png')}${T(53,'extension.')}</div>
<div class="tri" style="margin-top:31px">${I('tri')}</div>
<div class="card" style="margin:15px 0 0 85px;width:314px;height:68px"><div class="hd"><div class="r">${I('shot','margin-left:2px')}${T(85,'Take screenshot','','margin:0 0 3px 8px')}</div>${I('chev')}</div><div class="r" style="height:45px;justify-content:center;color:#3f8bce">${T(96.5,'Indicate on screen')}</div></div>
<div class="tri" style="margin-top:15px">${I('tri')}</div>
<div class="card" style="margin:15px 0 0 11px;width:463px;height:131px;border-bottom:0;overflow:hidden"><div class="hd"><div class="r">${I('iff','margin-left:2px')}${T(70,'If no file path','','margin:0 0 3px 6px')}</div>${I('chev')}</div>
<div style="padding:0 6px"><div class="r" style="height:30px;padding-top:7px">${T(52.5,'Condition')}</div><div class="r" style="height:24px;border:2px solid #cdd3e2;border-width:2px 1px 1px;padding-left:5px;color:#333">${T(174,'String.IsNullOrEmpty(io_filePath)')}</div>
<div class="r" style="height:23px"><div style="width:293px" class="r"><div class="g"></div>${T(27,'Then')}<div class="g"></div></div><div style="width:157px;padding-left:8px" class="r"><div class="g"></div>${T(20,'Else')}<div class="g"></div></div></div>
<div class="r" style="align-items:flex-start"><div class="card" style="width:293px;height:60px"><div class="card" style="margin:20px 0 0 24px;width:241px"><div class="hd"><div class="r"><div style="font:bold 9px/12px 'Liberation Sans';margin:4px 0 0 4px;width:14px;color:#444">${T(13,'A+B')}</div>${T(75,'Make file path','','margin:0 0 3px 7px')}</div></div></div></div><div class="card" style="width:150px;height:60px;margin-left:8px"></div></div></div></div></div>`);

define('doc-area', `<style>${BASE}
:host{display:flex;flex-direction:column;width:784px;flex:none;padding-top:6px}
.box{border:1px solid #cfcfcf;border-top:0;height:537px;display:flex;flex-direction:column}
.bc{height:28px;background:#fff;border-bottom:1px solid #cdd3e2;padding:2px 6px 0 7px}
.cv{display:flex;height:479px;background:#fff;overflow:hidden;flex:none}
.sb{width:17px;background:#efefef;display:flex;flex-direction:column;align-items:center;flex:none}
.btn{width:15px;height:16px;border:1px solid #aaa;background:#fff;display:flex;align-items:center;justify-content:center}
.ft{height:25px;border-top:1px solid #bbb;background:#f1f1f1;padding-left:5px;padding-right:7px}
</style><doc-tabs></doc-tabs><div class="box"><div class="r bc">${T(82,'TakeScreenshot','','color:#333')}<div class="g"></div>${T(55,'Expand All','','margin-bottom:2px')}${T(61.5,'Collapse All','','margin:0 0 2px 10.500px')}</div>
<div class="cv"><div class="g"><seq-flow></seq-flow></div><div class="sb"><div class="btn"><svg width="7" height="5"><path d="M0 4.500h7L3.500.500z" fill="#999"/></svg></div><div style="width:15px;height:164px;border:1px solid #999;background:#fff;margin-top:1px"></div><div class="g"></div><div class="btn"><svg width="7" height="5"><path d="M0 .500h7L3.500 4.500z" fill="#999"/></svg></div></div></div>
<div style="height:4px;background:#fff"></div>
<div class="r ft">${T(47,'Variables')}${T(59,'Arguments','','margin-left:17px')}${T(42,'Imports','','margin-left:16px')}<div class="g"></div>${I('hand')}${I('zoom','margin-left:10px')}${T(29,'100%','','margin-left:14px')}<div style="margin-left:26px;width:14px;height:19px;background:#f8f8f8;border:1px solid #e8e8e8" class="r"><svg width="7" height="5" style="margin:auto"><path d="M0 0h7L3.500 4.500z" fill="#222"/></svg></div>${I('fit','margin-left:12px')}${I('over','margin-left:10px','w="15"')}</div></div>`);

define('panel-head', el => `<style>${BASE}
:host{display:flex;align-items:center;height:23px;flex:none;padding:0 7px 0 6px;color:#555}
.d{flex:1;height:5px;margin:0 9px 0 8px;background:radial-gradient(circle .7px,#999 95%,transparent) 0 0/4px 4px,radial-gradient(circle .7px,#999 95%,transparent) 2px 2px/4px 4px}
</style>${T(el.getAttribute('w'),el.getAttribute('t'))}<div class="d"></div>${I('pd','margin-top:3px')}${I('pin','margin-left:9px')}`);

define('prop-panel', `<style>${BASE}
:host{display:block;height:195px;flex:none;border:1px solid #cbcbcb}
.in{border:1px solid #999;height:170px;background:#fff}
.gr{background:#efefef;padding-left:2px}
.row{background:#fff;border-left:13px solid #efefef;border-bottom:1px solid #efefef;display:flex;align-items:center;padding-right:1px}
.v{border-left:1px solid #efefef;width:209px;height:100%;display:flex;align-items:center;padding-left:4px}
.cb{width:13px;height:13px;border:1px solid #888;background:linear-gradient(135deg,#c8ccd2,#f4f4f4);box-shadow:inset 0 0 0 2px #f4f4f4}
b{font-weight:700}
</style><panel-head t="Properties" w="53"></panel-head><div class="in"><div class="r gr" style="height:26px;padding-bottom:3px">${T(205.5,'System.Activities.Statements.Sequence')}</div>
<div class="r gr" style="height:21px;padding-bottom:1px">${I('minus')}${T(50,'<b>Common</b>','','margin-left:6px')}</div><div class="row" style="height:21px">${T(70,'DisplayName','','margin-left:5px')}<div class="g"></div><div class="v" style="padding-bottom:2px">${T(111,'Screenshot sequence')}</div></div>
<div class="r gr" style="height:20px;padding-bottom:2px">${I('minus')}${T(25,'<b>Misc</b>','','margin-left:6px')}</div><div class="row" style="height:22px">${T(36,'Private','','margin-left:5px')}<div class="g"></div><div class="v"><div class="cb"></div></div></div></div>`);

define('outline-panel', `<style>${BASE}
:host{display:block;height:178px;flex:none;border:1px solid #cbcbcb;margin-top:6px}
.in{height:153px;background:#fff}
</style><panel-head t="Outline" w="39"></panel-head><div class="in"><div class="r" style="height:16px;padding:0 0 0 8px"><svg width="7" height="7"><path d="M6 0v6H0z" fill="#333"/></svg>${T(84,'TakeScreenshot','','margin-left:6px')}</div>
<div class="r" style="height:17px;padding-left:28px"><svg width="7" height="9"><path d="M1 1l4 3.500-4 3.500z" fill="none" stroke="#aaa"/></svg><div class="r" style="width:173px;height:16px;background:#b9d1e6;margin-left:4px;padding-left:4px">${I('seq')}${T(112,'Screenshot sequence','','margin:0 0 1px 3px')}</div></div></div>`);

define('locals-panel', `<style>${BASE}
:host{display:block;flex:none;margin-top:6px}
.p{border:1px solid #cbcbcb;height:154px}
.in{border:1px solid #999;height:130px;background:#efefef;display:flex}
.h{height:23px;background:linear-gradient(#fff 40%,#f2f3f5 42%,#f0f1f3);border-bottom:1px solid #d0d0d0}
.w{height:23px;background:#fff;border-bottom:1px solid #efefef}
.c1{width:260px;height:100%;border-right:1px solid #e4e4e4;padding-left:3px;display:flex;align-items:center}
.c2{padding-left:5px}
.sb{width:17px;background:#f2f2f2;display:flex;flex-direction:column;justify-content:space-between}
.btn{height:16px;width:16px;border:1px solid #ddd;display:flex;align-items:center;justify-content:center}
</style><div class="p"><panel-head t="Locals" w="33"></panel-head><div class="in"><div class="g"><div class="r h"><div class="c1" style="padding-left:5px">${T(32,'Name')}</div>${T(29,'Value','c2')}</div>
<div class="r w"><div class="c1" style="padding-bottom:6px">${T(57,'io_FilePath')}</div></div><div class="r w"><div class="c1" style="padding-bottom:6px">${T(48.5,'in_Folder')}</div><div class="c2" style="padding-bottom:2px">${T(124,'Exceptions_Screenshots')}</div></div></div><div class="sb"><div class="btn"><svg width="7" height="4"><path d="M0 4h7L3.500 0z" fill="#ddd"/></svg></div><div class="btn"><svg width="7" height="4"><path d="M0 0h7L3.500 4z" fill="#ddd"/></svg></div></div></div></div>
<div class="r" style="height:20px"><div style="width:45px;height:20px;background:#fff;border:1px solid #cbcbcb;border-top:0;color:#0173c7;padding-left:5px" class="r">${T(33,'Locals')}</div>${T(37.5,'Output','','margin-left:6.500px;color:#555')}</div>`);

define('studio-window', `<style>${BASE}
:host{display:flex;flex-direction:column;height:728px;background:#f1f1f1;flex:none;color:#000;-webkit-text-stroke:.22px}
.m{display:flex;height:571px}
.rt{width:539px;margin-left:5px;padding-top:6px;display:flex;flex-direction:column;flex:none}
</style><studio-title></studio-title><studio-ribbon></studio-ribbon><div class="m"><side-tabs></side-tabs><doc-area></doc-area><div class="rt"><prop-panel></prop-panel><outline-panel></outline-panel><locals-panel></locals-panel></div></div>`);

const uiBig = '<div style="width:32px;height:32px;background:#1f76b8;color:#fff;font:bold 22px/32px \'Open Sans\';display:flex;justify-content:center"><fit-text w="25">Ui</fit-text></div>';
define('task-bar', `<style>${BASE}
:host{display:flex;align-items:center;height:40px;flex:none;border-top:1px solid #2a3a5c;box-shadow:inset 0 1px 0 #7d92bd;background:linear-gradient(90deg,#16346f 0,#1b3a85 60px,#1c3c88 660px,#20428b 800px,#244691 960px,#2f589f 1040px,#27477f 1080px,#24447c 1366px)}
.b{width:59px;height:38px;border:1px solid #b9c4dd;border-radius:3px;margin-right:3px;background:linear-gradient(120deg,rgba(255,255,255,.55),rgba(255,255,255,.22) 48%,rgba(255,255,255,.12) 52%,rgba(255,255,255,.25));display:flex;align-items:center;justify-content:center;flex:none;box-shadow:0 0 0 1px #16295a;position:relative}
.ie{background:linear-gradient(135deg,#fbe9a0,#eda33c 55%,#d8691c);width:54px;margin-right:8px}
.on{background:linear-gradient(120deg,#dbe3f3,#a7b6d6 50%,#8fa1c8)}
.tag{position:absolute;font:bold 10px/12px "Open Sans";color:#222}
</style><div style="width:8px"></div>${I('orb')}${I('wmp','margin:0 21px 0 29px')}
<div class="b">${I('expl')}</div><div class="b ie">${I('ie')}</div><div class="b">${I('skype')}<div class="tag" style="left:36px;top:22px">1</div></div><div class="b">${I('slack')}<div class="tag" style="left:23px;top:8px;font-size:16px;line-height:20px">S</div></div><div class="b">${I('outl')}</div><div class="b">${I('chrome')}</div><div class="b on">${uiBig}</div><div class="b">${I('npp')}<div class="tag" style="left:18px;top:8px;font-size:12px;line-height:16px">${T(15,'n++')}</div></div><div class="b">${uiBig}</div>
<div class="g"></div><div class="r" style="color:#fff;margin-right:12px">${T(13.5,'ES','','margin:0 19px 4px 0')}<svg width="8" height="5" style="margin-right:14px"><path d="M0 4.500h8L4 0z" fill="#fff"/></svg>${I('flag','margin-right:9px')}${I('drop','margin-right:9px')}${I('bat','margin-right:9px')}${I('net','margin-right:9px')}${I('vol','margin-right:18px')}<div class="c" style="align-items:center;line-height:17px">${T(27,'18:07')}${T(58.5,'09/04/2018')}</div></div>
<div style="width:13px;height:38px;border:1px solid #8fa4cc;background:linear-gradient(#5f7db3,#1d3a78);margin-right:1px"></div>`);

define('desk-top', `<style>:host{display:flex;width:2732px;height:768px;overflow:hidden}.s{width:1366px;flex:none;display:flex;flex-direction:column}</style>
<browser-window></browser-window><div class="s"><studio-window></studio-window><task-bar></task-bar></div>`);
</script>
</body>
</html>
